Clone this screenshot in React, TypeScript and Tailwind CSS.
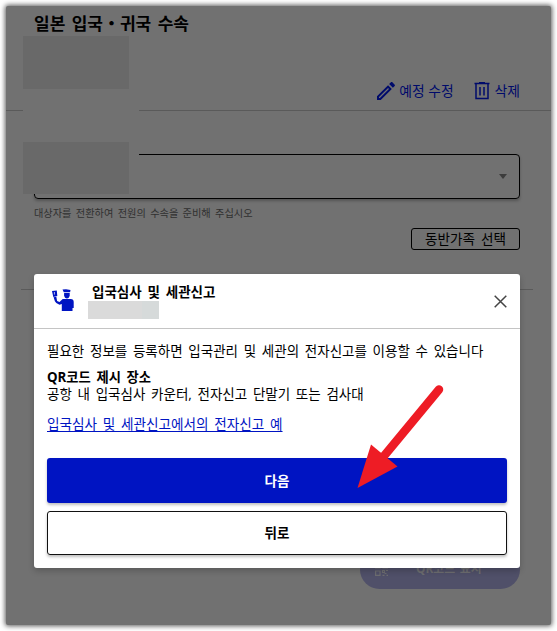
function PencilIcon() {
  return (
    <svg width="24" height="24" viewBox="0 0 24 24" fill="currentColor" className="shrink-0">
      <path d="M14.06 9.02l.92.92L5.92 19H5v-.92l9.06-9.06M17.66 3c-.25 0-.51.1-.7.29l-1.83 1.83 3.75 3.75 1.83-1.83c.39-.39.39-1.02 0-1.41l-2.34-2.34c-.2-.2-.45-.29-.71-.29zm-3.6 3.19L3 17.25V21h3.75L17.81 9.94l-3.75-3.75z" />
    </svg>
  )
}

function TrashIcon() {
  return (
    <svg width="16" height="18" viewBox="0 0 16 18" fill="none" stroke="currentColor" strokeWidth="1.5" className="shrink-0">
      <path d="M.5 1.5h15M5 .8h6M2 1.5v15h12v-15M6 5v8.5M10 5v8.5" />
    </svg>
  )
}

function OfficerIcon() {
  return (
    <svg width="24" height="24" viewBox="0 0 24 24" fill="currentColor" className="shrink-0">
      <path d="M1 2l4.800-.6.5 5.600-4 .9z" />
      <path d="M2.600 8.300l2.700-.6.8 4.300 2.400.9 3.200-2.900h8q3 .2 3 3v6h-1.200v3H10.800v-7l-2.300.7q-3.400-.7-4.600-3.400z" />
      <path d="M11.500.6l3.500-.4 4.500.8-.4 2.300h-6.300z" />
      <path d="M13.100 3.900h5.600v2.300q-.6 3.200-2.800 3.200t-2.800-3z" />
      <path d="M3.400 3v2.600" stroke="#fff" strokeWidth=".7" />
    </svg>
  )
}

function CloseIcon() {
  return (
    <svg width="13" height="13" viewBox="0 0 13 13" fill="none" stroke="#444" strokeWidth="1.5">
      <path d="M.7.7l11.6 11.6M12.3.7L.7 12.3" />
    </svg>
  )
}

function QrIcon() {
  return (
    <svg width="13" height="13" viewBox="0 0 13 13" fill="none" stroke="currentColor" strokeWidth="1.2" className="shrink-0">
      <path d="M.6.6h4.400v4.400H.6zM8 .6h4.400v4.400H8zM.6 8h4.400v4.400H.6z" />
      <path d="M7.500 7.500h2v2h-2zM11 7.500h2M9.500 10.500h2M7.500 12.400h2M11.500 12.400H13" />
    </svg>
  )
}

function TripPage() {
  return (
    <div className="relative h-full overflow-hidden rounded-[2px] bg-[#717171] shadow-[0_0_5px_1px_rgba(0,0,0,0.65)]">
      <div className="flex h-[105px] flex-col justify-between border-b border-[#5a5a5a]">
        <h1 className="mt-[5px] ml-[28px] text-[17px] leading-[26px] font-bold text-black [word-spacing:2px]">
          일본 입국・귀국 수속
        </h1>
        <div className="mr-[31px] mb-[7px] flex h-6 items-center justify-end text-[13.8px] text-[#000b6b] [word-spacing:3px]">
          <button className="flex items-center">
            <PencilIcon />
            <span className="ml-px">예정 수정</span>
          </button>
          <button className="ml-[20px] flex items-center">
            <TrashIcon />
            <span className="ml-[5px]">삭제</span>
          </button>
        </div>
      </div>

      <div className="pt-[43px] pr-[31px] pl-[28px]">
        <div className="flex h-[45px] items-center justify-end rounded-[4px] border border-black pr-[12px] shadow-[0_2px_3px_rgba(0,0,0,0.25)]">
          <div className="h-0 w-0 border-x-[4.5px] border-t-[5px] border-x-transparent border-t-[#3c3c3c]" />
        </div>
        <p className="mt-[6px] text-[10.2px] leading-[16px] text-[#303030] [word-spacing:1.7px]">
          대상자를 전환하여 전원의 수속을 준비해 주십시오
        </p>
        <div className="mt-[7px] flex justify-end">
          <button className="flex h-[22px] w-[109px] items-center justify-center rounded-[3px] border border-black pt-px text-[13.6px] text-black [word-spacing:2.5px]">
            동반가족 선택
          </button>
        </div>
      </div>

      <hr className="mt-[39px] mr-[18px] ml-[15px] border-[#5a5a5a]" />

      <div className="mt-[260px] mr-[31px] flex justify-end">
        <button className="flex h-[39px] w-[160px] items-center rounded-[20px] bg-[#505069] text-[11.9px] font-bold text-[#6d6d70] [word-spacing:1.5px]">
          <span className="ml-[15px]">
            <QrIcon />
          </span>
          <span className="-mt-[3px] ml-[28px] leading-5">QR코드 표시</span>
        </button>
      </div>

      {/* masked personal data */}
      <div className="absolute top-[30px] left-[17px] flex h-[158px] w-[116px] flex-col justify-between bg-[#717171]">
        <div className="h-[53px] w-[106px] bg-[#696969]" />
        <div className="h-[52px] w-[106px] bg-[#696969]" />
      </div>
    </div>
  )
}

function EntryModal() {
  return (
    <div className="absolute top-[274px] left-[34px] flex h-[294px] w-[486px] flex-col rounded-[3px] bg-white text-black shadow-[0_3px_6px_rgba(0,0,0,0.2)]">
      <div className="flex h-[55px] items-center border-b border-[#c4c4c4] pr-[13px] pl-[17px]">
        <span className="text-[#0014c2]">
          <OfficerIcon />
        </span>
        <div className="ml-[13px] flex-1">
          <h2 className="ml-[4px] text-[13.5px] leading-[18px] font-bold [word-spacing:2.3px]">
            입국심사 및 세관신고
          </h2>
          <div className="flex h-[18px] w-[71px] bg-[#dadada]">
            <div className="ml-auto w-[17px] bg-[#d6dada]" />
          </div>
        </div>
        <CloseIcon />
      </div>

      <div className="flex flex-1 flex-col px-[13px] pt-[13px] text-[13.5px] leading-[18px] [word-spacing:2.2px]">
        <p className="whitespace-nowrap">필요한 정보를 등록하면 입국관리 및 세관의 전자신고를 이용할 수 있습니다</p>
        <p className="mt-[8px] text-[13.3px] font-bold">QR코드 제시 장소</p>
        <p className="-mt-px">공항 내 입국심사 카운터, 전자신고 단말기 또는 검사대</p>
        <a href="#" className="mt-[12px] self-start text-[13.6px] text-[#0014c2] underline underline-offset-2">
          입국심사 및 세관신고에서의 전자신고 예
        </a>
        <button className="mt-[25px] h-[45px] shrink-0 rounded-[3px] bg-[#0014c2] font-bold text-white shadow-[0_2px_3px_rgba(0,0,0,0.25)]">
          다음
        </button>
        <button className="mt-[8px] h-[44px] shrink-0 rounded-[3px] border border-[#111] font-bold shadow-[0_2px_3px_rgba(0,0,0,0.25)]">
          뒤로
        </button>
      </div>
    </div>
  )
}

function PointerArrow() {
  return (
    <svg width="90" height="108" viewBox="0 0 90 108" className="pointer-events-none absolute top-[383px] left-[355px]">
      <path d="M84 6.5L29 73" stroke="#ee1c25" strokeWidth="8.5" strokeLinecap="round" />
      <path d="M2.5 105L16 61.5L42.5 83.5Z" fill="#ee1c25" />
    </svg>
  )
}

export default function App() {
  return (
    <div className="relative h-[631px] w-[557px] overflow-hidden bg-white p-[6px] font-['Open_Sans','Noto_Sans_CJK_KR',sans-serif]">
      <TripPage />
      <EntryModal />
      <PointerArrow />
    </div>
  )
}
